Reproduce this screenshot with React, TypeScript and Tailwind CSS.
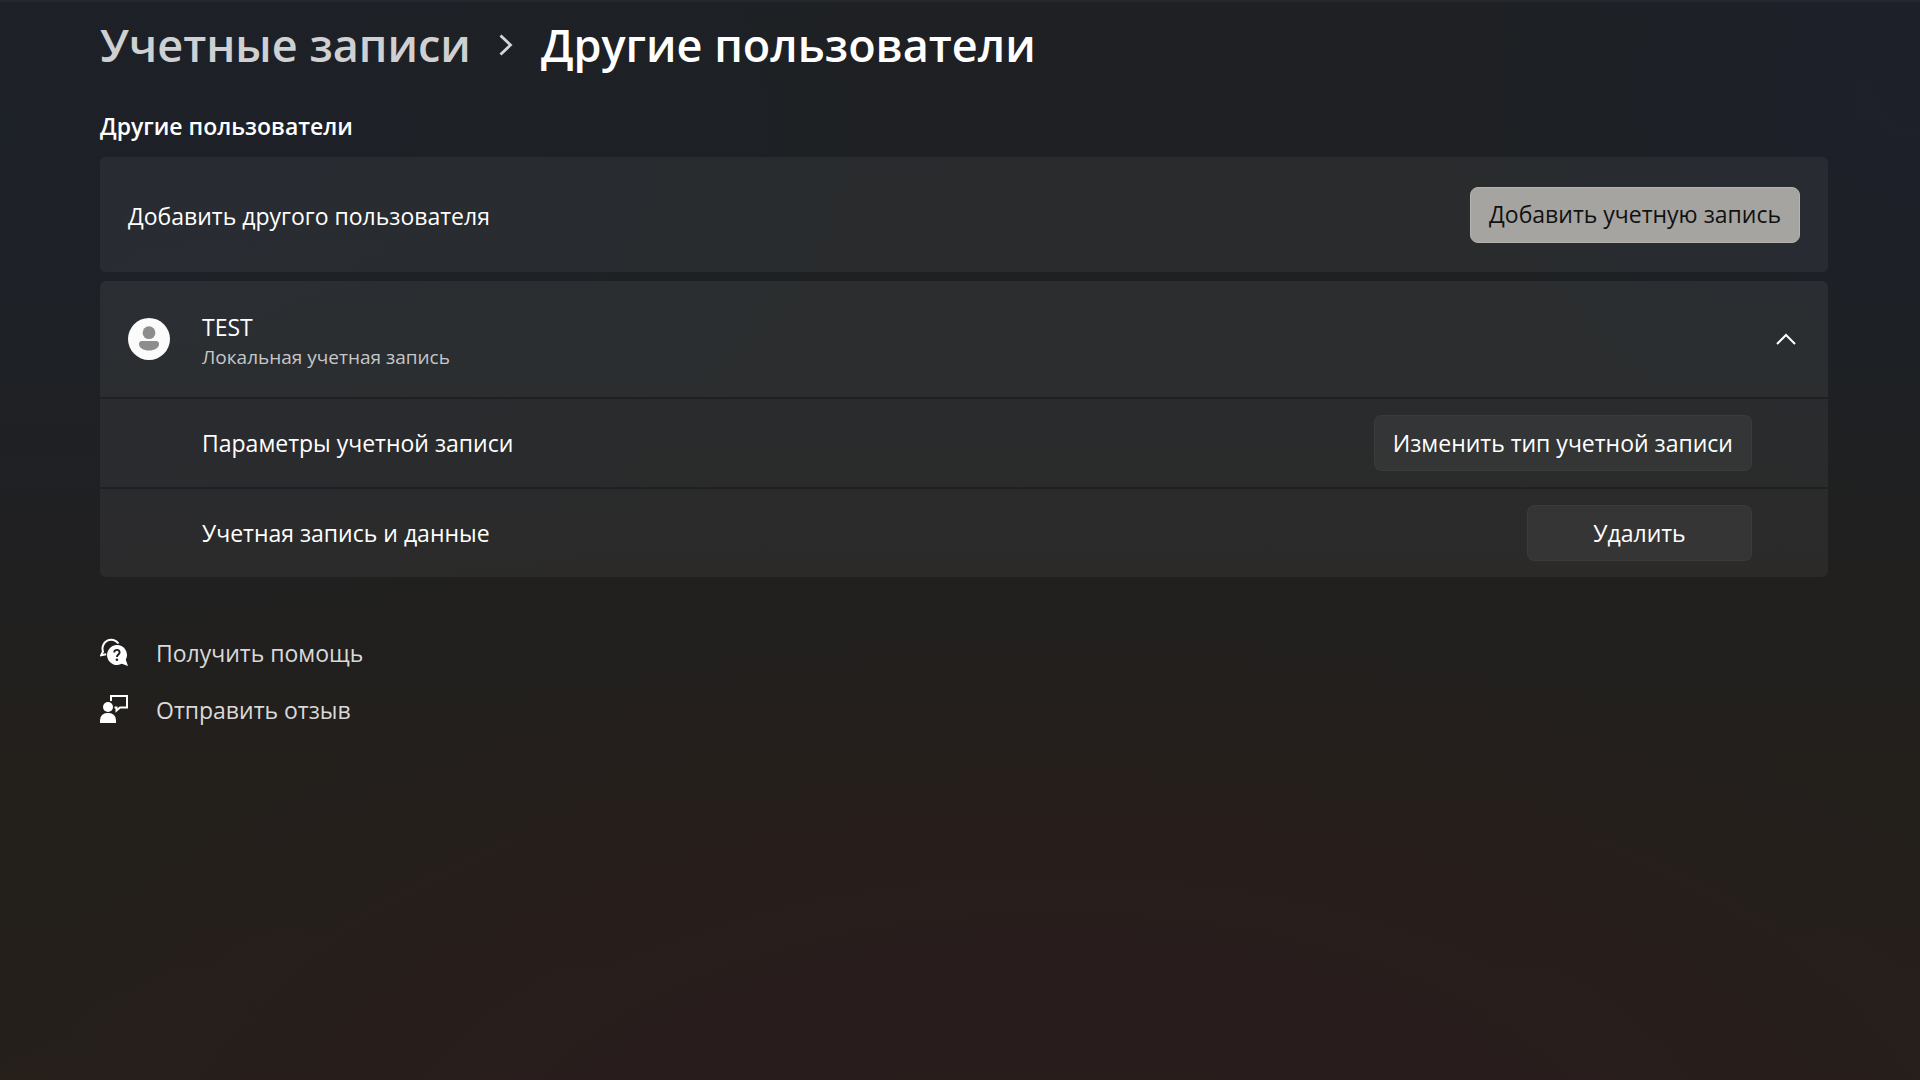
import type { ReactNode } from "react";

export default function App() {
  return (
    <div className="min-h-screen border-t-2 border-[#25282d] bg-[#1f2022] bg-[radial-gradient(ellipse_50%_50%_at_0%_12%,#1d2128_0%,transparent_100%),radial-gradient(ellipse_25%_40%_at_100%_8%,#1d202a_0%,transparent_100%),radial-gradient(ellipse_60%_55%_at_55%_112%,#291d1c_0%,#281d1c_45%,transparent_100%),linear-gradient(to_bottom,#1e2024_0%,#1f2021_40%,#231f1b_75%,#251f1a_100%)] pl-[100px] pr-[92px] font-['Open_Sans','Noto_Sans',sans-serif] text-[23px] text-white">
      <nav aria-label="Навигация" className="flex items-center pt-[9px] text-[45px] font-semibold">
        <a href="#accounts" className="leading-[68px] text-[#cfd0d2]">
          Учетные записи
        </a>
        <svg viewBox="0 0 14 22" className="mx-7 h-[22px] w-[14px]" fill="none" stroke="#d5d6d8" strokeWidth="2.8" aria-hidden="true">
          <path d="M1.5 1.5 11.5 11l-10 9.5" />
        </svg>
        <h1 className="leading-[68px]">Другие пользователи</h1>
      </nav>

      <main>
        <h2 className="mt-[31px] leading-8 font-semibold">Другие пользователи</h2>

        <section className="mt-[15px] flex h-[115px] items-center justify-between rounded-md bg-white/5 px-7">
          <span className="pt-1">Добавить другого пользователя</span>
          <button className="h-14 rounded-lg border border-[#b4b3b0] bg-[#a5a4a0] px-[18px] text-[#111111]">
            Добавить учетную запись
          </button>
        </section>

        <section className="mt-[9px] overflow-hidden rounded-md">
          <button className="flex h-[116px] w-full items-center bg-white/6 px-7 text-left" aria-expanded="true">
            <AvatarIcon />
            <span className="ml-8 flex-1 pt-1">
              <span className="block leading-8">TEST</span>
              <span className="block text-[19px] leading-7 text-[#c5c7c9]">Локальная учетная запись</span>
            </span>
            <svg viewBox="0 0 20 12" className="mr-1 h-3 w-5" fill="none" stroke="white" strokeWidth="2" aria-hidden="true">
              <path d="m1 11 9-9 9 9" />
            </svg>
          </button>
          <SettingRow label="Параметры учетной записи" action="Изменить тип учетной записи" />
          <SettingRow label="Учетная запись и данные" action="Удалить" />
        </section>

        <div className="mt-[48px] flex flex-col items-start">
          <HelpLink href="#help" icon={<HelpIcon />} label="Получить помощь" />
          <HelpLink href="#feedback" icon={<FeedbackIcon />} label="Отправить отзыв" />
        </div>
      </main>
    </div>
  );
}

function SettingRow({ label, action }: { label: string; action: string }) {
  return (
    <div className="mt-[2px] flex h-[88px] items-center justify-between bg-white/5 pr-19 pl-[102px]">
      <span>{label}</span>
      <button className="h-14 min-w-[225px] rounded-lg border border-white/3 bg-white/5 px-[18px]">{action}</button>
    </div>
  );
}

function HelpLink({ href, icon, label }: { href: string; icon: ReactNode; label: string }) {
  return (
    <a href={href} className="flex h-[57px] items-center gap-7 text-[#d9d9d9]">
      {icon}
      {label}
    </a>
  );
}

function AvatarIcon() {
  return (
    <svg viewBox="0 0 42 42" className="size-[42px]" aria-hidden="true">
      <circle cx="21" cy="21" r="21" fill="#fbfbfb" />
      <circle cx="21" cy="14.7" r="6.4" fill="#8d8d8d" />
      <path d="M14 23h14a3 3 0 0 1 3 3c0 4-4.500 6.500-10 6.500S11 30 11 26a3 3 0 0 1 3-3Z" fill="#8d8d8d" />
    </svg>
  );
}

function HelpIcon() {
  return (
    <svg viewBox="0 0 28 28" className="mb-1 size-7" aria-hidden="true">
      <path d="M18.500 5.500A8.800 8.800 0 0 0 3 13.500L1.200 17.200l5-1" fill="none" stroke="white" strokeWidth="2" />
      <path d="M17 7a10 10 0 1 0 4.800 18.800L28 28l-2.200-6.200A10 10 0 0 0 17 7Z" fill="white" />
      <path d="M14.200 14.400c0-3.400 5.400-3.400 5.400 0 0 2-2.700 2.200-2.700 4.600" fill="none" stroke="#202123" strokeWidth="1.900" />
      <circle cx="16.900" cy="21.700" r="1.300" fill="#202123" />
    </svg>
  );
}

function FeedbackIcon() {
  return (
    <svg viewBox="0 0 28 28" className="mb-1 size-7" aria-hidden="true">
      <circle cx="8" cy="12" r="5" fill="white" />
      <path d="M0 28v-3a7 7 0 0 1 7-7h2a7 7 0 0 1 7 7v3Z" fill="white" />
      <path d="M11 6V1h16v11.500h-7L16.500 15.500v-3H14.500" fill="none" stroke="white" strokeWidth="2" />
    </svg>
  );
}
